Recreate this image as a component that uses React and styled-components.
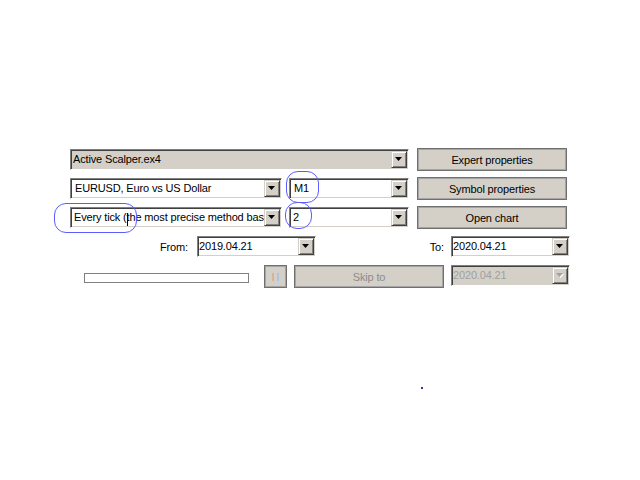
import React from 'react';
import styled, { createGlobalStyle } from 'styled-components';

const Global = createGlobalStyle`
  html, body { margin: 0; padding: 0; background: #fff; }
  body { font-family: "Liberation Sans", Arial, sans-serif; font-size: 11px; letter-spacing: -0.15px; color: #000; }
`;

const Page = styled.div`
  position: relative;
  width: 640px;
  height: 480px;
  overflow: hidden;
  box-sizing: border-box;
  padding: 148px 0 0 70px;
  display: flex;
  flex-direction: column;
  gap: 6px;
  background: #fff;
`;

const Row = styled.div`
  display: flex;
  align-items: ${p => p.$align || 'center'};
  height: ${p => p.$h || 23}px;
  margin-top: ${p => p.$mt || 0}px;
`;

const ComboBox = styled.div`
  box-sizing: border-box;
  flex: none;
  width: ${p => p.$w}px;
  height: 21px;
  margin-left: ${p => p.$ml || 0}px;
  display: flex;
  align-items: center;
  padding: 1px;
  background: ${p => (p.$gray ? '#d4d0c8' : '#fff')};
  border: 1px solid;
  border-color: #808080 #fff #fff #808080;
  box-shadow: inset 1px 1px 0 #404040, inset -1px -1px 0 #d4d0c8;
`;

const ComboText = styled.div`
  flex: 1;
  min-width: 0;
  overflow: hidden;
  white-space: nowrap;
  padding-left: ${p => p.$pl || 0}px;
  line-height: 17px;
  color: ${p => (p.$disabled ? '#a0a0a0' : '#000')};
`;

const ArrowBtn = styled.div`
  box-sizing: border-box;
  flex: none;
  width: 16px;
  height: 17px;
  background: #d4d0c8;
  border: 1px solid;
  border-color: #d4d0c8 #404040 #404040 #d4d0c8;
  box-shadow: inset 1px 1px 0 #fff, inset -1px -1px 0 #808080;
  display: flex;
  align-items: center;
  justify-content: center;
`;

const Button = styled.div`
  box-sizing: border-box;
  flex: none;
  width: ${p => p.$w}px;
  height: 23px;
  margin-left: ${p => p.$ml || 0}px;
  margin-top: ${p => p.$mt || 0}px;
  background: #d4d0c8;
  border: 1px solid #707070;
  box-shadow: inset 0 0 0 1px #a4a4a4;
  display: flex;
  align-items: center;
  justify-content: center;
  color: ${p => (p.$disabled ? '#8c8c8c' : '#000')};
  white-space: nowrap;
`;

const Label = styled.div`
  flex: none;
  width: ${p => p.$w}px;
  text-align: right;
`;

const Progress = styled.div`
  box-sizing: border-box;
  flex: none;
  width: 165px;
  height: 10px;
  margin-left: ${p => p.$ml || 0}px;
  margin-top: 8px;
  background: #fff;
  border: 1px solid #808080;
`;

const PauseBar = styled.span`
  display: block;
  width: 2px;
  height: 8px;
  background: ${p => p.$c};
`;

const PauseIcon = styled.div`
  display: flex;
  gap: 3px;
`;

const Mark = styled.div`
  position: absolute;
  box-sizing: border-box;
  border: 1.5px solid #5c5cff;
  border-radius: 12px;
  pointer-events: none;
`;

const Dot = styled.div`
  position: absolute;
  left: 421px;
  top: 387px;
  width: 2px;
  height: 2px;
  background: #3030c0;
`;

const Cursor = styled.svg`
  position: absolute;
  left: 125px;
  top: 212px;
`;

const Arrow = ({ disabled }) => (
  <ArrowBtn>
    <svg width="8" height="5" viewBox="0 0 8 5">
      {disabled && <polygon points="1,1 8,1 4.5,5" fill="#fff" />}
      <polygon points="0,0 7,0 3.5,4" fill={disabled ? '#a0a0a0' : '#000'} />
    </svg>
  </ArrowBtn>
);

const Combo = ({ w, ml, gray, disabled, pl, children }) => (
  <ComboBox $w={w} $ml={ml} $gray={gray || disabled}>
    <ComboText $pl={pl} $disabled={disabled}>{children}</ComboText>
    <Arrow disabled={disabled} />
  </ComboBox>
);

export default function App() {
  return (
    <>
      <Global />
      <Page>
        <Row>
          <Combo w={339} gray pl={1}>Active Scalper.ex4</Combo>
          <Button $w={150} $ml={8}>Expert properties</Button>
        </Row>
        <Row>
          <Combo w={212} pl={3}>EURUSD, Euro vs US Dollar</Combo>
          <Combo w={120} ml={7} pl={3}>M1</Combo>
          <Button $w={150} $ml={8}>Symbol properties</Button>
        </Row>
        <Row>
          <Combo w={212} pl={2}>Every tick (the most precise method based on all available least timeframes)</Combo>
          <Combo w={120} ml={7} pl={2}>2</Combo>
          <Button $w={150} $ml={8}>Open chart</Button>
        </Row>
        <Row $h={21} $mt={1}>
          <Label $w={118}>From:</Label>
          <Combo w={119} ml={9} pl={0}>2019.04.21</Combo>
          <Label $w={128}>To:</Label>
          <Combo w={119} ml={7} pl={0}>2020.04.21</Combo>
        </Row>
        <Row $mt={2} $align="flex-start">
          <Progress $ml={14} />
          <Button $w={23} $ml={15}>
            <PauseIcon>
              <PauseBar $c="#d8b292" />
              <PauseBar $c="#a8c6e4" />
            </PauseIcon>
          </Button>
          <Button $w={150} $ml={7} $disabled>Skip to</Button>
          <Combo w={119} ml={7} disabled pl={0}>2020.04.21</Combo>
        </Row>

        <Mark style={{ left: 286, top: 171, width: 33, height: 32 }} />
        <Mark style={{ left: 285, top: 202, width: 27, height: 27 }} />
        <Mark style={{ left: 54, top: 203, width: 83, height: 30 }} />
        <Cursor width="5" height="15" viewBox="0 0 5 15">
          <path d="M2.5 1v13" stroke="#000" strokeWidth="1" fill="none" />
        </Cursor>
        <Dot />
      </Page>
    </>
  );
}
